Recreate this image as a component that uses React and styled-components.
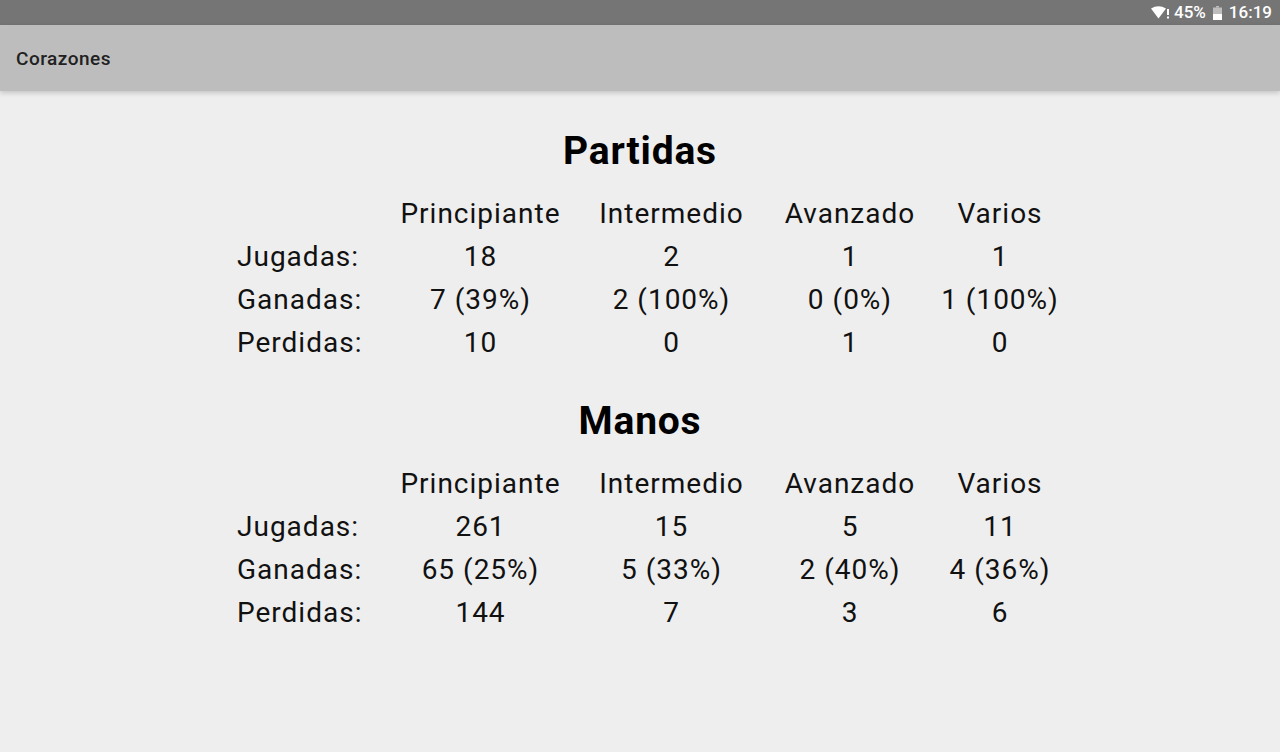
import React from 'react';
import styled, { createGlobalStyle } from 'styled-components';

const GlobalStyle = createGlobalStyle`
  html, body {
    margin: 0;
    padding: 0;
    background: #eeeeee;
    font-family: Roboto, "Noto Sans", sans-serif;
  }
`;

const Screen = styled.div`
  width: 1280px;
  height: 752px;
  display: flex;
  flex-direction: column;
  background: #eeeeee;
  overflow: hidden;
`;

const StatusBar = styled.div`
  height: 25px;
  background: #757575;
  display: flex;
  align-items: center;
  justify-content: flex-end;
  padding-right: 8px;
  color: #ffffff;
  font-size: 17px;
  font-weight: 500;
`;

const StatusText = styled.span`
  margin-left: ${p => p.gap || 0}px;
  line-height: 25px;
`;

const AppBar = styled.div`
  height: 66px;
  background: #bdbdbd;
  display: flex;
  align-items: center;
  padding-left: 16px;
  color: #212121;
  font-size: 19px;
  font-weight: 500;
  letter-spacing: 0.5px;
  position: relative;
  z-index: 1;
  box-shadow: 0 2px 5px rgba(0, 0, 0, 0.18);
`;

const Content = styled.div`
  padding-top: 37px;
  display: flex;
  flex-direction: column;
  align-items: center;
`;

const Section = styled.section`
  display: flex;
  flex-direction: column;
  align-items: center;
  margin-bottom: 34px;
`;

const Title = styled.h2`
  margin: 0 0 18px;
  font-size: 39px;
  line-height: 46px;
  letter-spacing: 0.8px;
  font-weight: 700;
  color: #000000;
`;

const Table = styled.div`
  display: grid;
  grid-template-columns: 144px 199px 183px 174px 126px;
  grid-auto-rows: 43px;
  padding-left: 20px;
  font-size: 28px;
  line-height: 43px;
  letter-spacing: 1px;
  color: #111111;
`;

const Cell = styled.div`
  text-align: ${p => (p.label ? 'left' : 'center')};
  white-space: nowrap;
`;

const WifiIcon = () => (
  <svg width="19" height="13" viewBox="0 0 19 13">
    <path d="M0 2.6 Q7.5 -2.2 15 2.6 L7.5 12.5 Z" fill="#fff" />
    <rect x="16" y="3" width="2" height="6" fill="#fff" />
    <rect x="16" y="10.5" width="2" height="2" fill="#fff" />
  </svg>
);

const BatteryIcon = () => (
  <svg width="9" height="14" viewBox="0 0 9 14" style={{ marginLeft: 7 }}>
    <rect x="3" y="0" width="3" height="1.5" fill="#bdbdbd" />
    <rect x="0" y="1.5" width="9" height="12.5" fill="#bdbdbd" />
    <rect x="0" y="8" width="9" height="6" fill="#fff" />
  </svg>
);

const levels = ['Principiante', 'Intermedio', 'Avanzado', 'Varios'];

const sections = [
  {
    title: 'Partidas',
    rows: [
      ['Jugadas:', '18', '2', '1', '1'],
      ['Ganadas:', '7 (39%)', '2 (100%)', '0 (0%)', '1 (100%)'],
      ['Perdidas:', '10', '0', '1', '0'],
    ],
  },
  {
    title: 'Manos',
    rows: [
      ['Jugadas:', '261', '15', '5', '11'],
      ['Ganadas:', '65 (25%)', '5 (33%)', '2 (40%)', '4 (36%)'],
      ['Perdidas:', '144', '7', '3', '6'],
    ],
  },
];

function StatsTable({ title, rows }) {
  return (
    <Section>
      <Title>{title}</Title>
      <Table>
        <Cell label />
        {levels.map(l => <Cell key={l}>{l}</Cell>)}
        {rows.map(row =>
          row.map((v, i) => (
            <Cell key={row[0] + i} label={i === 0}>{v}</Cell>
          ))
        )}
      </Table>
    </Section>
  );
}

export default function App() {
  return (
    <>
      <GlobalStyle />
      <Screen>
        <StatusBar>
          <WifiIcon />
          <StatusText gap={4}>45%</StatusText>
          <BatteryIcon />
          <StatusText gap={7}>16:19</StatusText>
        </StatusBar>
        <AppBar>Corazones</AppBar>
        <Content>
          {sections.map(s => (
            <StatsTable key={s.title} title={s.title} rows={s.rows} />
          ))}
        </Content>
      </Screen>
    </>
  );
}
